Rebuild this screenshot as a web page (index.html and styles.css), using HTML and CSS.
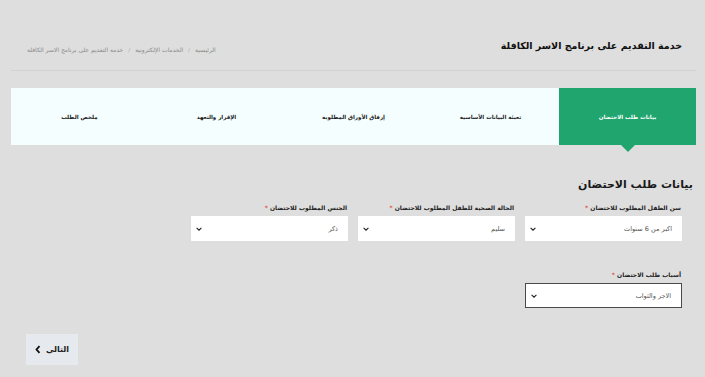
FILE: index.html
```html
<!DOCTYPE html>
<html lang="ar" dir="rtl">
<head>
    <meta charset="UTF-8">
    <meta name="viewport" content="width=device-width, initial-scale=1.0">
    <title>خدمة التقديم على برنامج الاسر الكافلة</title>
    <link rel="stylesheet" href="styles.css">
</head>
<body>
    <div class="page">
        <header class="page-header">
            <h1>خدمة التقديم على برنامج الاسر الكافلة</h1>
            <nav class="breadcrumb">
                <span>الرئيسية</span>
                <span class="sep">/</span>
                <span>الخدمات الإلكترونية</span>
                <span class="sep">/</span>
                <span class="current">خدمة التقديم على برنامج الاسر الكافلة</span>
            </nav>
        </header>

        <ol class="stepper">
            <li class="step active">بيانات طلب الاحتضان</li>
            <li class="step">تعبئة البيانات الأساسية</li>
            <li class="step">إرفاق الأوراق المطلوبة</li>
            <li class="step">الإقرار والتعهد</li>
            <li class="step">ملخص الطلب</li>
        </ol>

        <section class="form-section">
            <h2>بيانات طلب الاحتضان</h2>
            <div class="form-row">
                <div class="form-group">
                    <label>سن الطفل المطلوب للاحتضان <span class="req">*</span></label>
                    <div class="select">
                        <span>اكبر من 6 سنوات</span>
                        <svg class="chev" viewBox="0 0 10 6"><path d="M1 1l4 4 4-4"/></svg>
                    </div>
                </div>
                <div class="form-group">
                    <label>الحالة الصحية للطفل المطلوب للاحتضان <span class="req">*</span></label>
                    <div class="select">
                        <span>سليم</span>
                        <svg class="chev" viewBox="0 0 10 6"><path d="M1 1l4 4 4-4"/></svg>
                    </div>
                </div>
                <div class="form-group">
                    <label>الجنس المطلوب للاحتضان <span class="req">*</span></label>
                    <div class="select">
                        <span>ذكر</span>
                        <svg class="chev" viewBox="0 0 10 6"><path d="M1 1l4 4 4-4"/></svg>
                    </div>
                </div>
            </div>
            <div class="form-row second">
                <div class="form-group">
                    <label>أسباب طلب الاحتضان <span class="req">*</span></label>
                    <div class="select focused">
                        <span>الاجر والثواب</span>
                        <svg class="chev" viewBox="0 0 10 6"><path d="M1 1l4 4 4-4"/></svg>
                    </div>
                </div>
            </div>
        </section>

        <div class="actions">
            <button type="button" class="btn-next">
                التالي
                <svg class="btn-icon" viewBox="0 0 8 12"><path d="M6 1.5L2 6l4 4.5"/></svg>
            </button>
        </div>
    </div>
</body>
</html>
```

FILE: styles.css
```css
body {
    margin: 0;
    background-color: #dedede;
    color: #222;
    font-family: "DejaVu Sans", "Noto Sans", sans-serif;
}
.page {
    padding: 0 9px 0 11px;
}
.page-header {
    display: flex;
    justify-content: space-between;
    align-items: center;
    height: 71px;
    padding: 0 14px 0 16px;
    box-sizing: border-box;
    border-bottom: 1px solid #d2d2d2;
}
.page-header h1 {
    margin: 20px 0 0;
    font-size: 9.5px;
    font-weight: bold;
    color: #111;
}
.breadcrumb {
    margin-top: 29px;
    font-size: 6px;
    color: #8a8a8a;
}
.breadcrumb .sep {
    margin: 0 3px;
    color: #b0b0b0;
}
.stepper {
    display: flex;
    list-style: none;
    margin: 17px 0 0;
    padding: 0;
    height: 57px;
    background: #f5fefe;
}
.step {
    position: relative;
    flex: 1;
    display: flex;
    align-items: center;
    justify-content: center;
    font-size: 5.5px;
    font-weight: bold;
    color: #1a1a1a;
}
.step.active {
    background: #20a56e;
    color: #fff;
}
.step.active::after {
    content: "";
    position: absolute;
    top: 100%;
    left: 50%;
    margin-left: -7px;
    border-left: 7px solid transparent;
    border-right: 7px solid transparent;
    border-top: 7px solid #20a56e;
}
.form-section {
    padding: 0 3px 0 0;
}
.form-section h2 {
    margin: 33px 0 13px;
    font-size: 11px;
    font-weight: bold;
    color: #1a1a1a;
}
.form-row {
    display: grid;
    grid-template-columns: repeat(3, 157px);
    column-gap: 10px;
    padding-right: 11px;
}
.form-row.second {
    margin-top: 30px;
}
.form-group label {
    display: block;
    margin-bottom: 5px;
    padding-right: 1px;
    font-size: 6px;
    font-weight: bold;
    color: #222;
}
.req {
    color: #e0524a;
}
.select {
    display: flex;
    justify-content: space-between;
    align-items: center;
    height: 25px;
    padding: 0 10px 0 5px;
    box-sizing: border-box;
    background: #fff;
    font-size: 6.5px;
    color: #555;
}
.select.focused {
    border: 1px solid #4a4a4a;
}
.chev {
    width: 6px;
    height: 4px;
    fill: none;
    stroke: #222;
    stroke-width: 1.8;
}
.actions {
    display: flex;
    justify-content: flex-end;
    margin-top: 26px;
    padding-left: 15px;
}
.btn-next {
    display: flex;
    align-items: center;
    gap: 5px;
    width: 52px;
    height: 31px;
    padding: 0;
    justify-content: center;
    border: none;
    background: #e6e9ee;
    font-family: inherit;
    font-size: 8px;
    font-weight: bold;
    color: #222;
}
.btn-icon {
    width: 6px;
    height: 9px;
    fill: none;
    stroke: #111;
    stroke-width: 2.4;
}
```
